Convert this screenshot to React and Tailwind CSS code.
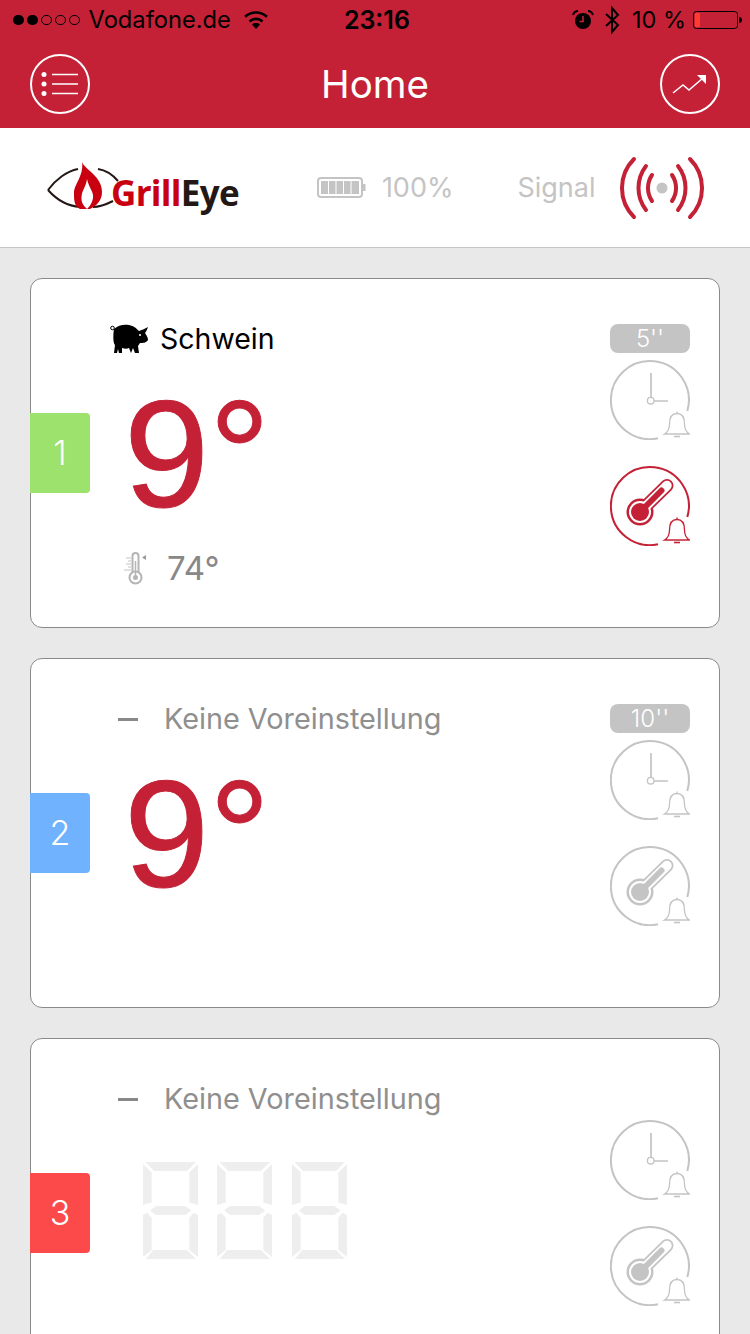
import React from 'react';

const RED = '#c42136';
const GREY = '#c4c4c4';

const StatusBar = () => (
  <div className="flex h-10 items-center text-black relative">
    <div className="ml-[13px] flex gap-[3.5px]">
      <span className="h-[10.5px] w-[10.5px] rounded-full bg-black" />
      <span className="h-[10.5px] w-[10.5px] rounded-full bg-black" />
      <span className="h-[10.5px] w-[10.5px] rounded-full border border-black" />
      <span className="h-[10.5px] w-[10.5px] rounded-full border border-black" />
      <span className="h-[10.5px] w-[10.5px] rounded-full border border-black" />
    </div>
    <span className="ml-[9px] text-[23.7px] leading-none">Vodafone.de</span>
    <svg className="ml-[12px]" width="26" height="20" viewBox="0 0 26 20">
      <path d="M13 19 L9 14.5 C11 12.6 15 12.6 17 14.5 Z" fill="#000" />
      <path d="M6.5 11.5 C10 8 16 8 19.5 11.5" fill="none" stroke="#000" strokeWidth="2.6" />
      <path d="M2 6.8 C8 1 18 1 24 6.8" fill="none" stroke="#000" strokeWidth="2.6" />
    </svg>
    <span className="ml-[75px] text-[25px] font-semibold leading-none">23:16</span>
    <svg className="ml-[162px]" width="22" height="22" viewBox="0 0 22 22">
      <circle cx="11" cy="12" r="8" fill="#000" />
      <path d="M11 7 V12.5 H7.5" fill="none" stroke={RED} strokeWidth="1.6" />
      <path d="M1 6 C2 3 4 2 6 2 M21 6 C20 3 18 2 16 2" fill="none" stroke="#000" strokeWidth="2" />
    </svg>
    <svg className="ml-[10px]" width="17" height="28" viewBox="0 0 17 28">
      <path d="M2 8 L14 19 L8 26 V2 L14 9 L2 20" fill="none" stroke="#000" strokeWidth="2" />
    </svg>
    <span className="ml-[11px] text-[23.5px] leading-none">10 %</span>
    <svg className="ml-[7px]" width="49" height="20" viewBox="0 0 49 20">
      <rect x="0.5" y="1.5" width="44" height="17" rx="3" fill="none" stroke="#000" />
      <rect x="2" y="3" width="5" height="14" fill="#ff3b30" />
      <path d="M46 7 C48 7 49 8 49 10 C49 12 48 13 46 13 Z" fill="#000" />
    </svg>
  </div>
);

const NavBar = () => (
  <div className="flex h-[88px] items-center justify-between px-[30px]">
    <div className="flex h-[60px] w-[60px] items-center justify-center rounded-full border-2 border-white">
      <svg width="38" height="26" viewBox="0 0 38 26">
        <circle cx="3" cy="3.5" r="2.5" fill="#fff" />
        <circle cx="3" cy="13" r="2.5" fill="#fff" />
        <circle cx="3" cy="22.5" r="2.5" fill="#fff" />
        <path d="M11 3.5 H37 M11 13 H37 M11 22.5 H37" stroke="#fff" strokeWidth="1.6" />
      </svg>
    </div>
    <span className="mt-[1px] text-[38.5px] leading-none text-white">Home</span>
    <div className="flex h-[60px] w-[60px] items-center justify-center rounded-full border-2 border-white">
      <svg width="36" height="22" viewBox="0 0 36 22">
        <path d="M1 20 L11 12 L17 17 L31 5" fill="none" stroke="#fff" strokeWidth="1.6" />
        <path d="M25 2 H34 V11 Z" fill="#fff" />
      </svg>
    </div>
  </div>
);

const Logo = () => (
  <div className="mb-[4px] flex items-center">
    <svg width="75" height="52" viewBox="0 0 75 52">
      <path d="M1 30 C8 20 20 11 31 9 M51 9 C58 10 65 14 71 21" fill="none" stroke="#231815" strokeWidth="2" />
      <path d="M1 30 C9 39 20 46 33 47 M46 47 C53 47 60 44 66 41" fill="none" stroke="#231815" strokeWidth="2" />
      <path d="M35 2 C38 10 55 16 55 32 C55 41 49 46 43 49 L33 49 C27 46 27 40 27 33 C27 24 37 16 35 2 Z" fill="#c8000f" />
      <path d="M40 19 C42 28 47 32 46 38 C45 44 42 47 40 49 C37 46 34 43 34.5 37 C35 30 39 27 40 19 Z" fill="#fff" />
    </svg>
    <span className="-ml-[11px] mt-[14px] text-[35px] font-bold leading-none tracking-[-0.7px]" style={{ fontFamily: '"Open Sans", sans-serif' }}>
      <span className="text-[#c8000f]">Grill</span>
      <span className="text-[#231815]">Eye</span>
    </span>
  </div>
);

const SignalIcon = () => (
  <svg width="90" height="66" viewBox="0 0 90 66">
    <circle cx="45" cy="33" r="5.5" fill={GREY} />
    <g fill="none" stroke={RED} strokeWidth="4" strokeLinecap="round">
      <path d="M17 4 A41 41 0 0 0 17 62 M73 4 A41 41 0 0 1 73 62" />
      <path d="M29 11 A36 36 0 0 0 29 55 M61 11 A36 36 0 0 1 61 55" />
      <path d="M35 20 A23 23 0 0 0 35 46 M55 20 A23 23 0 0 1 55 46" />
    </g>
  </svg>
);

const Header = () => (
  <div className="flex h-[120px] shrink-0 items-center border-b border-[#c4c4c4] bg-white pl-[47px]">
    <Logo />
    <svg className="ml-[78px]" width="49" height="21" viewBox="0 0 49 21">
      <rect x="1" y="1" width="44" height="19" rx="3" fill="none" stroke={GREY} strokeWidth="2" />
      <path d="M4 4 H42 V17 H4 Z" fill={GREY} />
      <path d="M11.5 4 V17 M19 4 V17 M26.500 4 V17 M34 4 V17" stroke="#fff" strokeWidth="1" />
      <rect x="45" y="7" width="3.500" height="7" fill={GREY} />
    </svg>
    <span className="ml-[16px] text-[27px] leading-none text-[#c4c4c4]">100%</span>
    <span className="ml-[64px] text-[27px] leading-none text-[#c4c4c4]">Signal</span>
    <span className="ml-[21px] flex"><SignalIcon /></span>
  </div>
);

const Bell = ({ color }) => (
  <g fill="none" stroke={color} strokeWidth="1.3">
    <path d="M54.500 74 C58 72 59.500 69 59.500 64 C59.500 57 62 53.500 67 53.500 C72 53.500 74.500 57 74.500 64 C74.500 69 76 72 79.500 74 Z" fill="#fff" />
    <path d="M67 53.500 V51.500" />
    <path d="M64 76.500 H70" strokeWidth="1.600" />
  </g>
);

const Ring = ({ color }) => (
  <path d="M77.300 51 A39 39 0 1 0 48 78.200" fill="none" stroke={color} strokeWidth="2" />
);

const ClockAlarm = () => (
  <svg width="80" height="80" viewBox="0 0 80 80">
    <Ring color={GREY} />
    <path d="M41 13 V37 M44 41 H58" fill="none" stroke={GREY} strokeWidth="1.700" />
    <circle cx="40.700" cy="40.700" r="3.300" fill="#fff" stroke={GREY} strokeWidth="1.300" />
    <Bell color={GREY} />
  </svg>
);

const TempAlarm = ({ color }) => (
  <svg width="80" height="80" viewBox="0 0 80 80">
    <Ring color={color} />
    <path d="M30 46 L57 19.500" stroke={color} strokeWidth="13" strokeLinecap="round" />
    <circle cx="30" cy="46" r="13.500" fill={color} />
    <path d="M30 46 L57 19.500" stroke="#fff" strokeWidth="9.500" strokeLinecap="round" />
    <circle cx="30" cy="46" r="11" fill="#fff" />
    <path d="M30 46 L51.500 24.500" stroke={color} strokeWidth="6" strokeLinecap="round" />
    <circle cx="30" cy="46" r="9" fill={color} />
    <Bell color={color} />
  </svg>
);

const Pig = () => (
  <svg width="40" height="32" viewBox="0 0 40 32">
    <circle cx="3.500" cy="5" r="1.800" fill="none" stroke="#000" strokeWidth="1" />
    <path
      d="M5 6 C9 2 15 1 20 2 C25 3 27 5 30 8 C32 7 36 6 39 4 C38 7 37 9 36 10 C38 13 39 15 39 17 C37 20 34 20 31 20 L29 23 L30 30 L26 30 L24 25 L22 30 L20 25 C18 26 16 26 13 25 L13 30 L10 30 L9 26 L8 30 L5 30 L6 22 C4 20 4 12 5 6 Z"
      fill="#000"
    />
    <circle cx="31" cy="12" r="1" fill="#fff" />
  </svg>
);

const ProbeThermo = () => (
  <svg width="27" height="34" viewBox="0 0 27 34">
    <rect x="9.500" y="2" width="6" height="23" rx="3" fill="none" stroke="#b5b5b5" strokeWidth="2" />
    <circle cx="12.500" cy="26.500" r="6" fill="#fff" stroke="#b5b5b5" strokeWidth="2" />
    <circle cx="12.500" cy="26.500" r="2.500" fill="#b5b5b5" />
    <path d="M12.500 10 V25" stroke="#b5b5b5" strokeWidth="1.500" />
    <path d="M3 7 H8 M5 10 H8 M3 13 H8 M5 16 H8 M1 19 H8" stroke="#c4c4c4" strokeWidth="1" />
    <path d="M23 4 V9 L19 6.500 Z" fill="#9a9a9a" />
  </svg>
);

const LcdDigit = () => (
  <svg width="55" height="97" viewBox="0 0 55 97">
    <g fill="#eeeeee">
      <polygon points="2.500,0 53,0 44,9 11,9" />
      <polygon points="0,2 8.700,10.500 8.700,40.500 0,43" />
      <polygon points="55,2 46.300,10.500 46.300,40.500 55,43" />
      <polygon points="7,48.500 13,44 42,44 48.500,48.500 42,53 13,53" />
      <polygon points="0,53 4.300,50.700 8.700,55.700 8.700,88 0,95" />
      <polygon points="55,53 50.700,50.700 46.300,55.700 46.300,88 55,95" />
      <polygon points="2.700,97 10.300,88 44,88 53,97" />
    </g>
  </svg>
);

const ProbeCard = ({ num, tabColor, badge, preset, temp, target, alarmColor }) => (
  <div className="flex h-[350px] shrink-0 rounded-xl border border-[#8a8a8a] bg-white">
    <div
      className="-ml-px flex h-20 w-[60px] items-center justify-center self-center rounded-r-[4px] text-[34px] font-light leading-none text-white"
      style={{ backgroundColor: tabColor }}
    >
      {num}
    </div>
    <div className="flex-1 pt-[40px]">
      {preset ? (
        <div className="flex h-10 items-center pl-[19px]">
          <Pig />
          <span className="ml-[11px] text-[28.5px] leading-none text-black">{preset}</span>
        </div>
      ) : (
        <div className="flex h-10 items-center pl-[28px]">
          <span className="h-[3px] w-5 bg-[#888888]" />
          <span className="ml-[26px] text-[28.8px] leading-none text-[#8f8f8f]">Keine Voreinstellung</span>
        </div>
      )}
      {temp ? (
        <div className="mt-[20px] h-[152px] pl-[34px] text-[153px] leading-[150px] text-[#c42136] [-webkit-text-stroke:1px_#c42136]" style={{ fontFamily: '"Liberation Sans", sans-serif' }}>{temp}</div>
      ) : (
        <div className="flex gap-[19.300px] pl-[53px] pt-[43px]">
          <LcdDigit />
          <LcdDigit />
          <LcdDigit />
        </div>
      )}
      {target && (
        <div className="mt-[20px] flex items-center pl-[33px]">
          <ProbeThermo />
          <span className="ml-[17px] text-[33px] leading-none text-[#888888]">{target}</span>
        </div>
      )}
    </div>
    <div className="flex w-[80px] flex-col pt-[45px] mr-[29px]">
      <div className="h-[29px]">
        {badge && (
          <div className="flex h-[29px] items-center justify-center rounded-lg bg-[#c4c4c4] text-[24px] font-light leading-none text-white">
            {badge}
          </div>
        )}
      </div>
      <div className="mt-[7px]"><ClockAlarm /></div>
      <div className="mt-[26px]"><TempAlarm color={alarmColor} /></div>
    </div>
  </div>
);

export default function App() {
  return (
    <div className="flex h-[1334px] w-[750px] flex-col overflow-hidden bg-[#e9e9e9]" style={{ fontFamily: 'Inter, "Noto Sans", sans-serif' }}>
      <div className="shrink-0 bg-[#c42136]">
        <StatusBar />
        <NavBar />
      </div>
      <Header />
      <div className="flex flex-col gap-[30px] px-[30px] pt-[30px]">
        <ProbeCard num="1" tabColor="#9ce26d" badge="5''" preset="Schwein" temp="9°" target="74°" alarmColor={RED} />
        <ProbeCard num="2" tabColor="#70b2fd" badge="10''" temp="9°" alarmColor={GREY} />
        <ProbeCard num="3" tabColor="#fc4a4a" alarmColor={GREY} />
      </div>
    </div>
  );
}
